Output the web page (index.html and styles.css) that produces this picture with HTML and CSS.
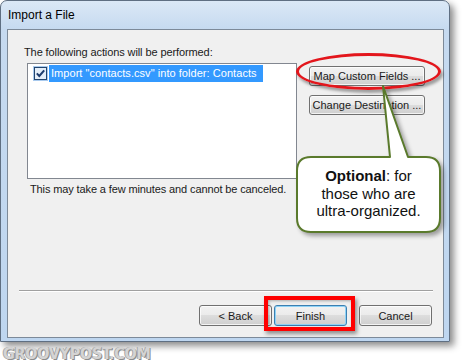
FILE: index.html
```html
<!DOCTYPE html>
<html lang="en">
<head>
  <meta charset="UTF-8">
  <title>Import a File</title>
  <link rel="stylesheet" href="styles.css">
</head>
<body>
  <div class="stage">
    <!-- Dialog window -->
    <div class="window">
      <div class="titlebar">Import a File</div>
      <div class="client">
        <div class="intro">The following actions will be performed:</div>
        <div class="actions-row">
          <div class="listbox">
            <div class="list-item">
              <span class="check">
                <svg width="15" height="15" viewBox="0 0 15 15">
                  <rect width="15" height="15" fill="#a9caee"/>
                  <rect x="1.5" y="1.5" width="12" height="12" fill="#e4eef9" stroke="#23456e"/>
                  <path d="M3.8 7.4 L6.3 10 L11.2 4.3" fill="none" stroke="#1d3c6e" stroke-width="2"/>
                </svg>
              </span>
              <span class="item-text">Import "contacts.csv" into folder: Contacts</span>
            </div>
          </div>
          <div class="side-buttons">
            <button class="btn btn-side">Map Custom Fields ...</button>
            <button class="btn btn-side">Change Destination ...</button>
          </div>
        </div>
        <div class="note">This may take a few minutes and cannot be canceled.</div>
        <div class="separator"></div>
        <div class="wizard-buttons">
          <button class="btn">&lt; Back</button>
          <button class="btn btn-default">Finish</button>
          <button class="btn btn-cancel">Cancel</button>
        </div>
      </div>
    </div>

    <div class="watermark">GROOVYPOST.COM</div>

    <!-- Annotations drawn over the screenshot -->
    <div class="mark-ellipse"></div>
    <div class="mark-box"></div>
    <svg class="callout-shape" width="150" height="152" viewBox="295 84 150 152">
      <path d="M311 157 L390 157 L383 86 L408 157 L426 157 Q440 157 440 171 L440 218 Q440 232 426 232 L311 232 Q297 232 297 218 L297 171 Q297 157 311 157 Z"
            fill="#fff" stroke="#5a7a2c" stroke-width="2" stroke-linejoin="round"/>
    </svg>
    <div class="callout-text"><b>Optional</b>: for<br>those who are<br>ultra-organized.</div>
  </div>
</body>
</html>
```

FILE: styles.css
```css
/* Base */
* {
  margin: 0;
  padding: 0;
  box-sizing: border-box;
}

body {
  background: #fff;
  font-family: 'Liberation Sans', Arial, sans-serif;
  color: #000;
}

.stage {
  position: relative;
  width: 471px;
  height: 364px;
}

/* Window frame */
.window {
  width: 450px;
  height: 342px;
  display: flex;
  flex-direction: column;
  padding: 0 5px 3px 6px;
  border: 1px solid #5f6f82;
  border-radius: 7px 7px 0 0;
  background: linear-gradient(to bottom, #dbe8f6 0, #c6daf0 28px, #bed6f0 100%);
  box-shadow: 4px 4px 7px rgba(0, 0, 0, 0.45);
}

.titlebar {
  height: 28px;
  padding: 7px 0 0 1px;
  font-size: 12px;
  line-height: 15px;
}

.client {
  flex: 1;
  display: flex;
  flex-direction: column;
  padding: 15px 11px 11px 16px;
  border: 1px solid #7d8a99;
  background: #f0f0f0;
  font-size: 11px;
  line-height: 15px;
  color: #1a1a1a;
}

.intro {
  height: 15px;
  letter-spacing: -0.1px;
}

/* List and side buttons */
.actions-row {
  display: flex;
  margin-top: 3px;
}

.listbox {
  width: 270px;
  height: 116px;
  margin-left: 3px;
  border: 1px solid #828790;
  background: #fff;
}

.list-item {
  display: flex;
  align-items: center;
  height: 17px;
  margin-top: 1px;
  padding-left: 5px;
}

.check {
  display: flex;
  width: 15px;
  height: 15px;
}

.item-text {
  margin-left: 1px;
  padding: 0 6px 0 2px;
  line-height: 17px;
  letter-spacing: 0.05px;
  background: #3399ff;
  color: #fff;
  white-space: nowrap;
}

.side-buttons {
  display: flex;
  flex-direction: column;
  gap: 9px;
  margin: 3px 0 0 12px;
}

.note {
  margin: 3px 0 0 6px;
  letter-spacing: -0.12px;
}

.separator {
  height: 2px;
  margin: auto -1px 0 -5px;
  border-top: 1px solid #a0a0a0;
  border-bottom: 1px solid #fff;
}

.wizard-buttons {
  display: flex;
  justify-content: flex-end;
  gap: 2px;
  margin-top: 13px;
}

/* Buttons */
.btn {
  width: 73px;
  height: 21px;
  border: 1px solid #707070;
  border-radius: 3px;
  background: linear-gradient(to bottom, #f2f2f2 0%, #ebebeb 50%, #dddddd 50%, #cfcfcf 100%);
  box-shadow: inset 0 0 0 1px rgba(255, 255, 255, 0.75);
  font-family: 'Liberation Sans', Arial, sans-serif;
  font-size: 11px;
  color: #1a1a1a;
  white-space: nowrap;
  overflow: hidden;
}

.btn-side {
  width: 116px;
  height: 20px;
  padding: 0 2px;
}

.btn-default {
  border-color: #3c7fb1;
  box-shadow: inset 0 0 0 1px #8fd3f6;
}

.btn-cancel {
  margin-left: 10px;
}

/* Watermark */
.watermark {
  margin: 3px 0 0 3px;
  font-family: 'DejaVu Sans Condensed', 'DejaVu Sans', sans-serif;
  font-weight: bold;
  font-size: 16px;
  line-height: 17px;
  letter-spacing: -0.3px;
  color: #d4d4d4;
  text-shadow: 1px 1px 0 #8c8c8c, -1px 0 0 #a8a8a8;
}

/* Annotations */
.mark-ellipse {
  position: absolute;
  left: 296px;
  top: 53px;
  width: 145px;
  height: 37px;
  border: 3px solid #e3161c;
  border-radius: 50%;
  box-shadow: 2px 3px 3px rgba(0, 0, 0, 0.35);
}

.mark-box {
  position: absolute;
  left: 264px;
  top: 296px;
  width: 91px;
  height: 35px;
  border: 4px solid #f00;
  box-shadow: 2px 3px 4px rgba(0, 0, 0, 0.4), inset 1px 1px 3px rgba(0, 0, 0, 0.3);
}

.callout-shape {
  position: absolute;
  left: 295px;
  top: 84px;
  filter: drop-shadow(3px 3px 2px rgba(0, 0, 0, 0.35));
}

.callout-text {
  position: absolute;
  left: 297px;
  top: 157px;
  width: 143px;
  padding-top: 10px;
  text-align: center;
  font-size: 15px;
  line-height: 17.5px;
  color: #111;
}
```
